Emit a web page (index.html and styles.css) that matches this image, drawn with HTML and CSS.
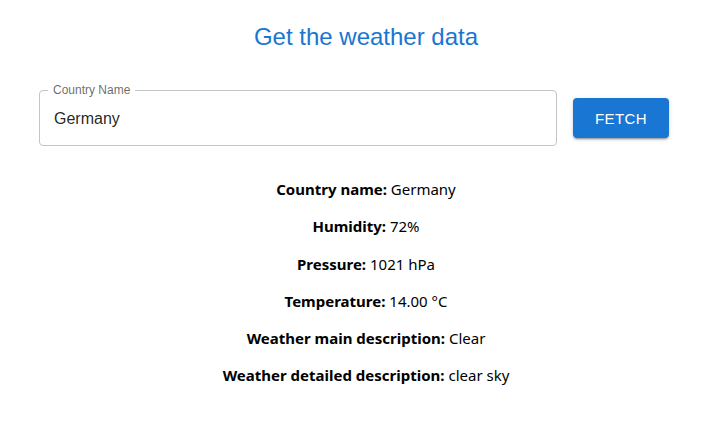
FILE: index.html
```html
<!DOCTYPE html>
<html>
<head>
<meta charset="utf-8">
<link rel="stylesheet" href="styles.css">
</head>
<body>
<div class="page">
  <h1 class="title">Get the weather data</h1>
  <div class="form-row">
    <div class="field">
      <label class="field-label">Country Name</label>
      <input class="field-input" type="text" value="Germany">
    </div>
    <button class="fetch-btn">FETCH</button>
  </div>
  <div class="results">
    <p class="line"><b>Country name:</b> Germany</p>
    <p class="line"><b>Humidity:</b> 72%</p>
    <p class="line"><b>Pressure:</b> 1021 hPa</p>
    <p class="line"><b>Temperature:</b> 14.00 °C</p>
    <p class="line"><b>Weather main description:</b> Clear</p>
    <p class="line"><b>Weather detailed description:</b> clear sky</p>
  </div>
</div>
</body>
</html>
```

FILE: styles.css
```css
html, body {
  margin: 0;
  padding: 0;
  background: #fff;
}
.page {
  padding-left: 19px;
  padding-top: 20px;
}
.title {
  margin: 0;
  text-align: center;
  font-family: "Liberation Sans", Arial, sans-serif;
  font-weight: 400;
  font-size: 24px;
  line-height: 34px;
  color: #1976d2;
}
.form-row {
  display: flex;
  align-items: center;
  gap: 16px;
  margin-top: 36px;
  padding-left: 20px;
}
.field {
  position: relative;
  width: 518px;
  height: 56px;
  box-sizing: border-box;
  padding: 0 14px;
  border: 1px solid #c4c4c4;
  border-radius: 4px;
  display: flex;
  align-items: center;
}
.field-label {
  position: absolute;
  left: 8px;
  top: -9px;
  padding: 0 5px;
  background: #fff;
  font-family: "Liberation Sans", Arial, sans-serif;
  font-size: 12px;
  line-height: 16px;
  color: rgba(0,0,0,0.6);
}
.field-input {
  border: none;
  outline: none;
  padding: 0;
  margin: 1px 0 0;
  width: 100%;
  font-family: "Liberation Sans", Arial, sans-serif;
  font-size: 16px;
  line-height: 20px;
  color: rgba(0,0,0,0.87);
  background: transparent;
}
.fetch-btn {
  width: 96px;
  height: 40px;
  border: none;
  border-radius: 4px;
  background: #1976d2;
  color: #fff;
  font-family: "Liberation Sans", Arial, sans-serif;
  font-size: 15px;
  letter-spacing: 0.4px;
  box-shadow: 0 3px 1px -2px rgba(0,0,0,0.2), 0 2px 2px 0 rgba(0,0,0,0.14), 0 1px 5px 0 rgba(0,0,0,0.12);
  padding: 0;
}
.results {
  margin-top: 33px;
  text-align: center;
  font-family: "Noto Sans", "Open Sans", sans-serif;
  font-size: 15px;
  color: #000;
}
.line {
  margin: 0 0 16px;
  line-height: 21.3px;
}
.line b {
  font-weight: 700;
}
```
